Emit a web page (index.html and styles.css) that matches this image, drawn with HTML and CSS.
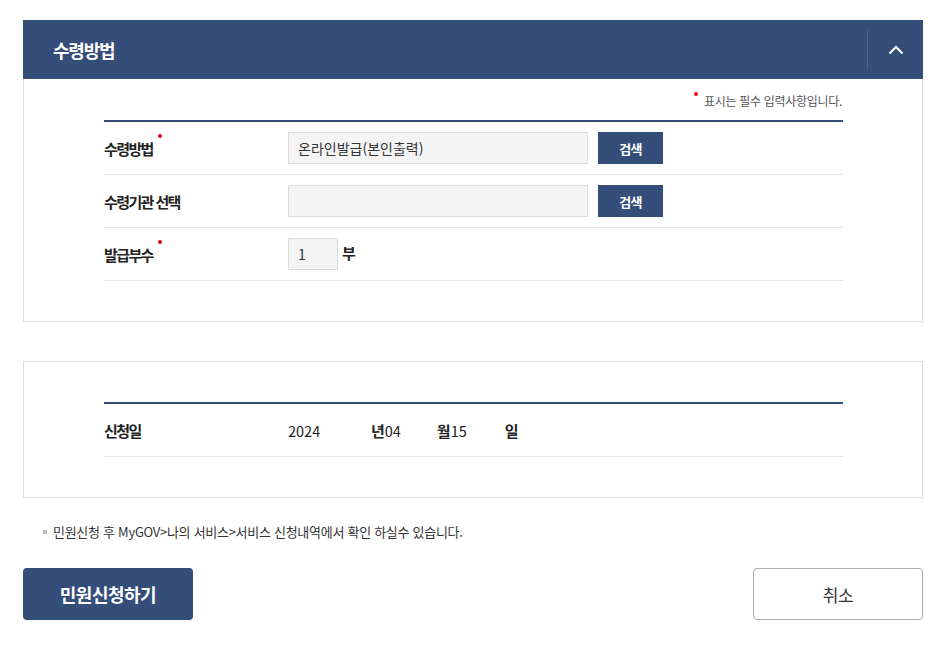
FILE: index.html
```html
<!DOCTYPE html>
<html lang="ko">
<head>
<meta charset="utf-8">
<title>수령방법</title>
<link rel="stylesheet" href="styles.css">
</head>
<body>
<div class="wrap">
  <div class="section-head">
    <h2 class="section-title">수령방법</h2>
    <div class="toggle">
      <svg width="16" height="10" viewBox="0 0 16 10"><polyline points="1.5,8.5 8,2 14.5,8.5" fill="none" stroke="#fff" stroke-width="2"/></svg>
    </div>
  </div>
  <div class="panel panel-first">
    <div class="notice"><span class="req-dot"></span>표시는 필수 입력사항입니다.</div>
    <div class="table">
      <div class="row">
        <div class="label">수령방법<span class="req"></span></div>
        <div class="field">
          <div class="input wide">온라인발급(본인출력)</div>
          <button class="btn-search">검색</button>
        </div>
      </div>
      <div class="row">
        <div class="label">수령기관 선택</div>
        <div class="field">
          <div class="input wide"></div>
          <button class="btn-search">검색</button>
        </div>
      </div>
      <div class="row">
        <div class="label">발급부수<span class="req"></span></div>
        <div class="field">
          <div class="input small">1</div>
          <span class="unit unit-bu">부</span>
        </div>
      </div>
    </div>
  </div>

  <div class="panel panel-second">
    <div class="table">
      <div class="row">
        <div class="label">신청일</div>
        <div class="field date">
          <span class="num num-year">2024</span><span class="unit">년</span><span class="num num-month">04</span><span class="unit">월</span><span class="num num-day">15</span><span class="unit">일</span>
        </div>
      </div>
    </div>
  </div>

  <p class="note"><span class="bullet"></span>민원신청 후 MyGOV&gt;나의 서비스&gt;서비스 신청내역에서 확인 하실수 있습니다.</p>

  <div class="actions">
    <button class="btn btn-primary">민원신청하기</button>
    <button class="btn btn-cancel">취소</button>
  </div>
</div>
</body>
</html>
```

FILE: styles.css
```css
* { box-sizing: border-box; }
body {
  margin: 0;
  background: #fff;
  font-family: "Noto Sans CJK KR", "Noto Sans", sans-serif;
  color: #222;
}
.wrap {
  width: 900px;
  margin: 20px 0 0 23px;
}
.section-head {
  height: 59px;
  background: #344d79;
  display: flex;
  align-items: center;
  justify-content: space-between;
  padding-left: 30px;
}
.section-title {
  margin: 0;
  color: #fff;
  font-size: 18px;
  font-weight: 700;
  letter-spacing: -1.2px;
  line-height: 24px;
}
.toggle {
  width: 56px;
  height: 40px;
  border-left: 1px solid #4a618a;
  display: flex;
  align-items: center;
  justify-content: center;
}
.panel {
  border: 1px solid #ddd;
  padding: 0 79px 40px 80px;
}
.panel-first {
  border-top: none;
}
.panel-second {
  margin-top: 39px;
  padding-top: 40px;
}
.notice {
  height: 41px;
  display: flex;
  align-items: center;
  justify-content: flex-end;
  font-size: 12px;
  letter-spacing: -0.3px;
  color: #555;
  padding-top: 2px;
  padding-right: 1px;
}
.req-dot {
  width: 4px;
  height: 4px;
  border-radius: 50%;
  background: #e60012;
  margin-right: 6px;
  align-self: flex-start;
  margin-top: 11px;
}
.table {
  border-top: 2px solid #344d79;
}
.row {
  height: 53px;
  border-bottom: 1px solid #e6e6e6;
  display: flex;
  align-items: center;
}
.label {
  width: 184px;
  font-size: 15px;
  font-weight: 700;
  letter-spacing: -1.6px;
  color: #222;
  line-height: 20px;
  padding-top: 2px;
}
.req {
  display: inline-block;
  width: 4px;
  height: 4px;
  border-radius: 50%;
  background: #e60012;
  margin-left: 5px;
  position: relative;
  top: -17px;
}
.field {
  display: flex;
  align-items: center;
}
.input {
  height: 32px;
  background: #f4f4f4;
  border: 1px solid #ddd;
  padding: 0 9px;
  font-size: 14px;
  line-height: 30px;
  color: #333;
}
.input.wide { width: 300px; }
.input.small { width: 50px; }
.btn-search {
  margin-left: 10px;
  width: 65px;
  height: 32px;
  border: none;
  background: #344d79;
  color: #fff;
  font-family: inherit;
  font-size: 13px;
  font-weight: 700;
  letter-spacing: -0.8px;
  padding: 0;
}
.unit {
  font-size: 15px;
  font-weight: 700;
  color: #222;
}
.unit-bu {
  margin-left: 4px;
  align-self: flex-start;
  margin-top: 4px;
}
.date {
  font-size: 14px;
  line-height: 20px;
  padding-top: 2px;
}
.num {
  display: inline-block;
  color: #222;
  font-size: 14.5px;
}
.num-year { width: 83px; }
.num-month { width: 52px; }
.num-day { width: 54px; }
.note {
  margin: 24px 0 0 0;
  padding-left: 20px;
  display: flex;
  align-items: center;
  font-size: 13px;
  letter-spacing: -0.28px;
  color: #333;
  line-height: 20px;
}
.bullet {
  width: 4px;
  height: 4px;
  background: #bbb;
  margin-right: 6px;
}
.actions {
  margin-top: 26px;
  display: flex;
  justify-content: space-between;
}
.btn {
  width: 170px;
  height: 52px;
  border-radius: 4px;
  font-family: inherit;
  font-size: 18px;
  letter-spacing: -0.5px;
  padding: 0;
}
.btn-primary {
  background: #344d79;
  border: none;
  color: #fff;
  font-weight: 700;
}
.btn-cancel {
  background: #fff;
  border: 1px solid #aaa;
  color: #333;
  font-size: 17px;
}
```
